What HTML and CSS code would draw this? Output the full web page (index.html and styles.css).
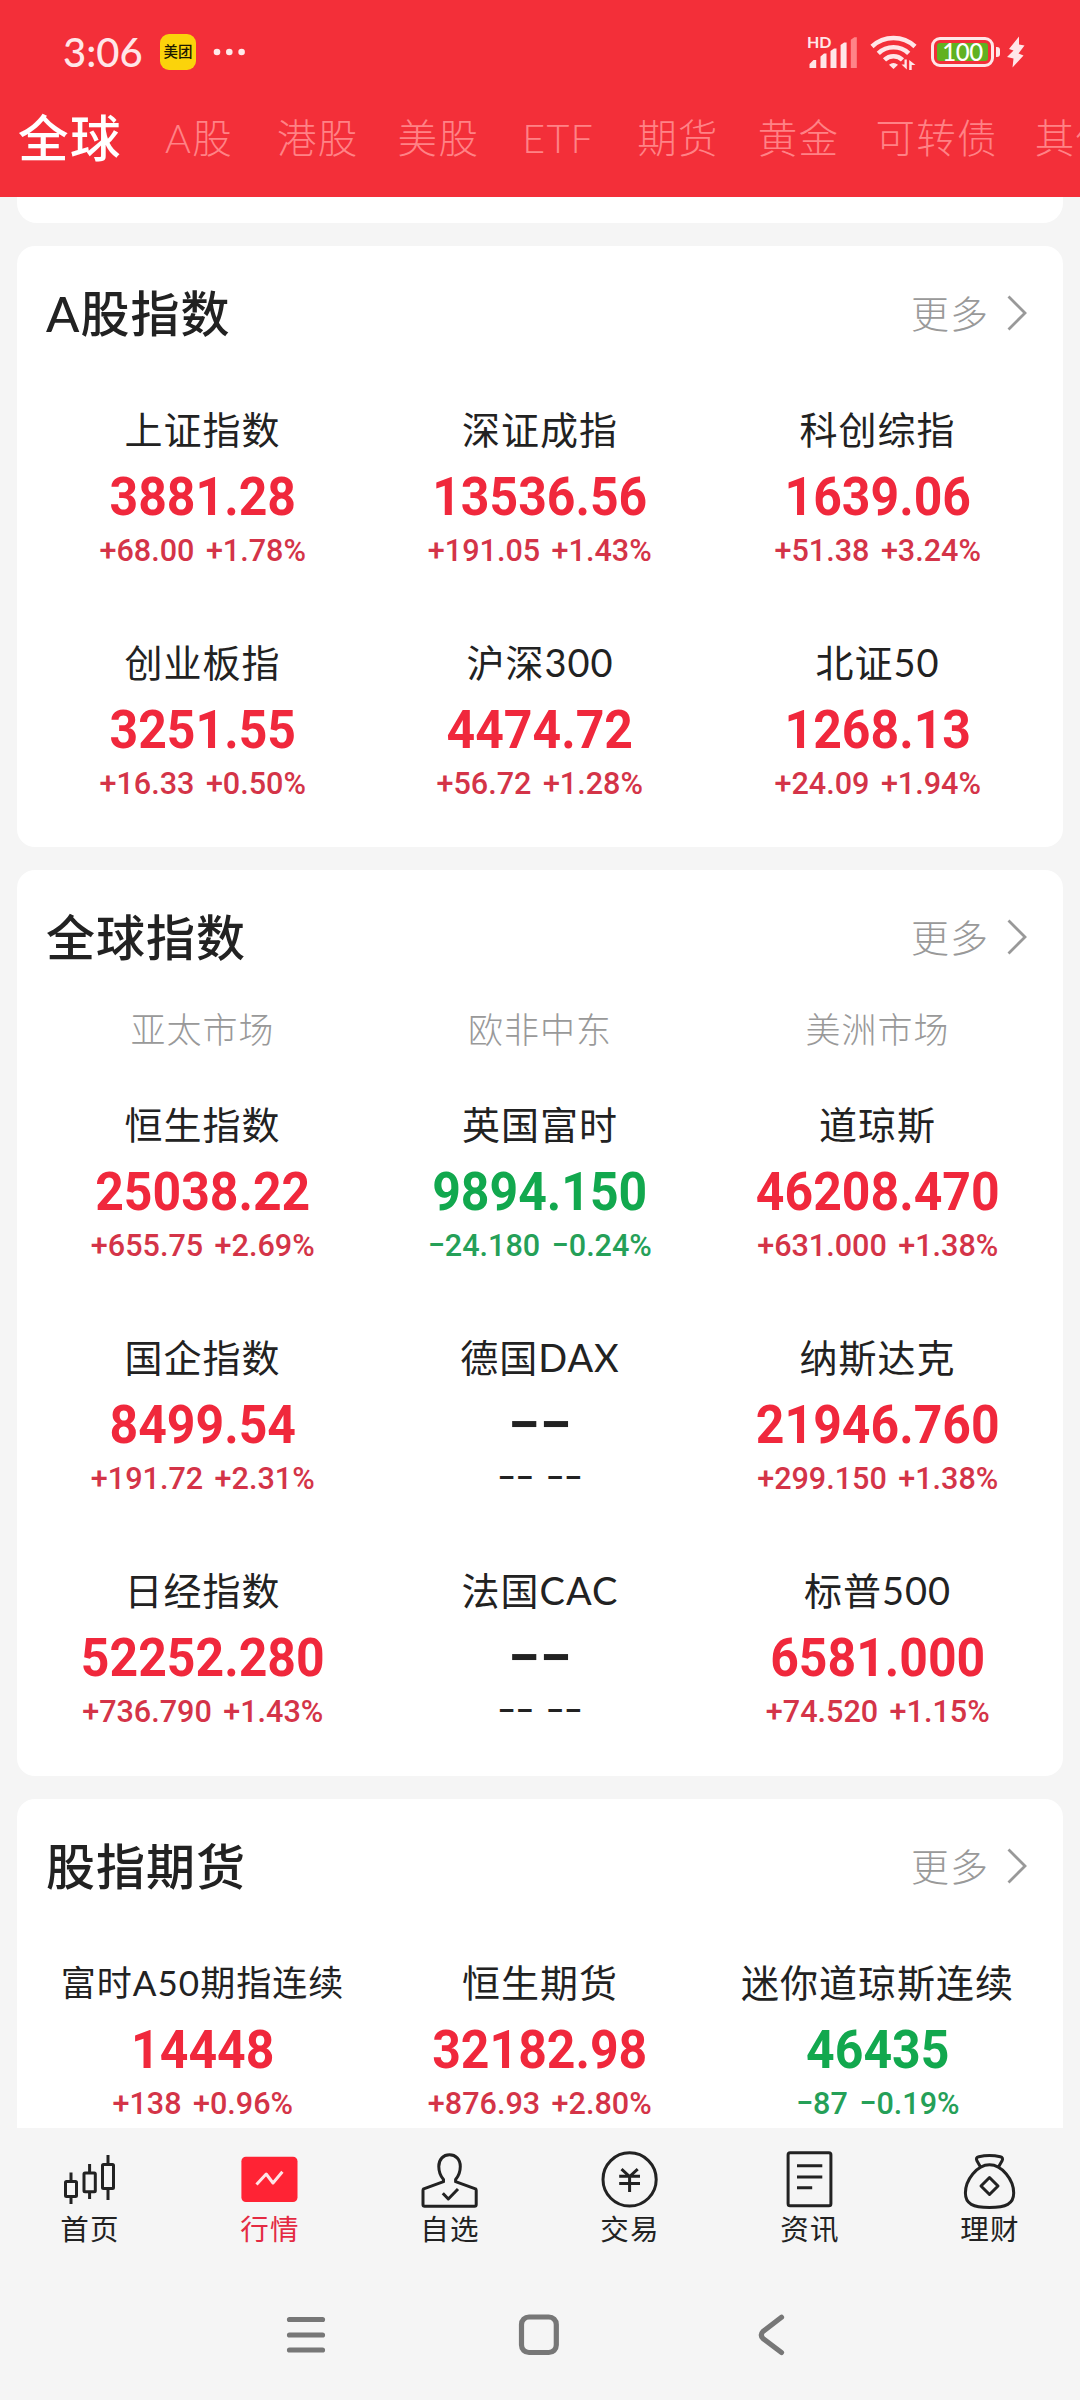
FILE: index.html
```html
<!DOCTYPE html>
<html lang="zh-CN">
<head>
<meta charset="utf-8">
<title>行情</title>
<link rel="stylesheet" href="styles.css">
</head>
<body>
<div class="screen">
  <header class="top">
    <div class="status">
      <span class="clock">3:06</span>
      <span class="app-badge">美团</span>
      <svg class="dots" width="28" height="8" viewBox="0 0 28 8" fill="#ffe9e9"><circle cx="4" cy="4" r="3.3"/><circle cx="16.3" cy="4" r="3.3"/><circle cx="28.6" cy="4" r="3.3"/></svg>
      <div class="status-right">
        <div class="signal">
          <span class="hd">HD</span>
          <svg width="50" height="36" viewBox="0 0 50 36" fill="#ffe6e8"><path d="M1.500 34v-4l4-4h2.700v8zM12.500 34V22.500l3.500-3h2.500V34zM22.500 34V17l3.500-2.500h2.500V34zM32.600 34V11l3.500-2.500h2.500V34z"/><path d="M42.800 34V5.700L46.300 3.200h2.500V34z" fill="#ff8488"/></svg>
        </div>
        <svg class="wifi" width="48" height="36" viewBox="0 0 48 36" fill="none" stroke="#ffe6e8" stroke-width="4.600"><path d="M2 12.500a31.500 31.500 0 0 1 43 0"/><path d="M8.300 19.300a22 22 0 0 1 30.400 0"/><path d="M14.500 25.800a13 13 0 0 1 18 0"/><path d="M23.500 35l-4.500-4.300q4.500-3.500 9 0z" fill="#ffe6e8" stroke="none"/><path d="M36.800 25.500V35.500L31.500 30.500H34.500V25.500zM39.200 36V26L45.500 31H41.700V36z" fill="#ffe6e8" stroke="none"/></svg>
        <div class="battery"><span>100</span></div>
        <svg class="bolt" width="18" height="32" viewBox="0 0 18 32" fill="#ffe6e8"><path d="M12 0.500L2 13 6.500 14.500 0 21 6.500 22.500 5.500 31.500 16.500 19.500 11.500 17.500 17.500 9.500 12 8.500z"/></svg>
      </div>
    </div>
    <nav class="tabs">
      <span class="tab on">全球</span><span class="tab tab-a">A股</span><span class="tab">港股</span><span class="tab">美股</span><span class="tab tab-etf">ETF</span><span class="tab">期货</span><span class="tab">黄金</span><span class="tab tab-bond">可转债</span><span class="tab">其他</span>
    </nav>
  </header>

  <main class="content">
    <div class="card-tail"></div>

    <section class="card">
      <div class="card-head"><h2>A股指数</h2><a class="more">更多<svg width="20" height="36" viewBox="0 0 20 36"><path d="M1.500 1.500L18 18 1.500 34.500"/></svg></a></div>
      <div class="grid">
        <div class="cell up"><div class="name">上证指数</div><div class="price">3881.28</div><div class="chg">+68.00 +1.78%</div></div>
        <div class="cell up"><div class="name">深证成指</div><div class="price">13536.56</div><div class="chg">+191.05 +1.43%</div></div>
        <div class="cell up"><div class="name">科创综指</div><div class="price">1639.06</div><div class="chg">+51.38 +3.24%</div></div>
        <div class="cell up"><div class="name">创业板指</div><div class="price">3251.55</div><div class="chg">+16.33 +0.50%</div></div>
        <div class="cell up"><div class="name">沪深300</div><div class="price">4474.72</div><div class="chg">+56.72 +1.28%</div></div>
        <div class="cell up"><div class="name">北证50</div><div class="price">1268.13</div><div class="chg">+24.09 +1.94%</div></div>
      </div>
    </section>

    <section class="card">
      <div class="card-head"><h2>全球指数</h2><a class="more">更多<svg width="20" height="36" viewBox="0 0 20 36"><path d="M1.500 1.500L18 18 1.500 34.500"/></svg></a></div>
      <div class="markets"><span>亚太市场</span><span>欧非中东</span><span>美洲市场</span></div>
      <div class="grid grid-markets">
        <div class="cell up"><div class="name">恒生指数</div><div class="price">25038.22</div><div class="chg">+655.75 +2.69%</div></div>
        <div class="cell down"><div class="name">英国富时</div><div class="price">9894.150</div><div class="chg">−24.180 −0.24%</div></div>
        <div class="cell up"><div class="name">道琼斯</div><div class="price">46208.470</div><div class="chg">+631.000 +1.38%</div></div>
        <div class="cell up"><div class="name">国企指数</div><div class="price">8499.54</div><div class="chg">+191.72 +2.31%</div></div>
        <div class="cell none"><div class="name">德国DAX</div><div class="price">−−</div><div class="chg">−− −−</div></div>
        <div class="cell up"><div class="name">纳斯达克</div><div class="price">21946.760</div><div class="chg">+299.150 +1.38%</div></div>
        <div class="cell up"><div class="name">日经指数</div><div class="price">52252.280</div><div class="chg">+736.790 +1.43%</div></div>
        <div class="cell none"><div class="name">法国CAC</div><div class="price">−−</div><div class="chg">−− −−</div></div>
        <div class="cell up"><div class="name">标普500</div><div class="price">6581.000</div><div class="chg">+74.520 +1.15%</div></div>
      </div>
    </section>

    <section class="card">
      <div class="card-head"><h2>股指期货</h2><a class="more">更多<svg width="20" height="36" viewBox="0 0 20 36"><path d="M1.500 1.500L18 18 1.500 34.500"/></svg></a></div>
      <div class="grid">
        <div class="cell up"><div class="name name-long">富时A50期指连续</div><div class="price">14448</div><div class="chg">+138 +0.96%</div></div>
        <div class="cell up"><div class="name">恒生期货</div><div class="price">32182.98</div><div class="chg">+876.93 +2.80%</div></div>
        <div class="cell down"><div class="name">迷你道琼斯连续</div><div class="price">46435</div><div class="chg">−87 −0.19%</div></div>
      </div>
    </section>
  </main>

  <nav class="tabbar">
    <div class="item"><svg viewBox="0 0 60 60"><rect x="5.500" y="31.500" width="11" height="15" rx="1"/><path d="M11 22.500v8M11 47v7"/><rect x="24" y="23" width="11.300" height="18.800" rx="1"/><path d="M29.600 14v8M29.600 43v6"/><rect x="42.500" y="14.500" width="11" height="24" rx="1"/><path d="M48 5v8M48 40v10"/></svg><span>首页</span></div>
    <div class="item active"><svg viewBox="0 0 60 60"><rect x="1.400" y="6.700" width="56.100" height="45.300" rx="4.500" fill="#ff2334" stroke="none"/><path d="M16.500 34.500L26.200 24 33 33 42.400 21.800" stroke="#ffe4e6"/></svg><span>行情</span></div>
    <div class="item"><svg viewBox="0 0 60 60"><path d="M23.500 31.700V29.500C20 25.500 18.800 21 18.800 16.500 18.800 9 23.500 4.800 29.500 4.800S40.300 9 40.300 16.500C40.300 21 39 25.500 35.600 29.500V31.700L55.500 38.800Q56.200 39.300 56.200 40.500V54.500Q56.200 56.200 54.500 56.200H4.700Q3 56.200 3 54.500V40.500Q3 39.300 3.700 38.800Z"/><path d="M22.800 43.300L28.300 49 38 39"/></svg><span>自选</span></div>
    <div class="item"><svg viewBox="0 0 60 60"><circle cx="29.600" cy="29.400" r="26.600"/><path d="M21.500 19.200L29.600 26.500 37.700 19.200M19.200 26.300H40M19.200 33.500H40M29.600 26.500V42"/></svg><span>交易</span></div>
    <div class="item"><svg viewBox="0 0 60 60"><rect x="8.100" y="2.800" width="42.800" height="53" rx="2"/><path d="M17 15.800H42.300M17 27H42.300M17 37.800H32.200"/></svg><span>资讯</span></div>
    <div class="item"><svg viewBox="0 0 60 60"><path d="M20.500 17L16.800 10.500Q15.500 7.500 18.800 6.700 29.500 4.500 40.300 6.700 43.500 7.500 42.200 10.500L38.500 17"/><path d="M29.500 14.800C42 14.800 53.700 30 53.700 43 53.700 54 46 57.400 29.500 57.400S5.400 54 5.400 43C5.400 30 17 14.800 29.500 14.800Z"/><path d="M29.500 27.500L38 36 29.500 44.500 21 36Z"/></svg><span>理财</span></div>
  </nav>
  <nav class="sysbar">
    <svg viewBox="0 0 44 44"><path d="M5.500 6.500h33M5.500 22h33M5.500 37h33"/></svg>
    <svg viewBox="0 0 44 44"><rect x="4.500" y="4" width="34.800" height="35.500" rx="7.500"/></svg>
    <svg viewBox="0 0 44 44"><path d="M31.500 4.300L13 18.500Q9.500 22 13 25.500L31.500 39.500"/></svg>
  </nav>
</div>
</body>
</html>
```
FILE: styles.css
```css
* { box-sizing: border-box; }
body {
  margin: 0;
  background: #f5f5f5;
  color: #222;
  font-family: Lato, "Noto Sans CJK SC", sans-serif;
}
.screen {
  width: 1080px;
  height: 2400px;
  display: flex;
  flex-direction: column;
  overflow: hidden;
}

/* header */
.top { height: 197px; flex: none; background: #f32f39; }
.status { height: 104px; display: flex; align-items: center; padding-left: 63px; }
.clock { width: 97px; font-size: 40px; line-height: 40px; color: #ffe6e8; font-weight: 500; }
.app-badge {
  width: 36px; height: 36px; border-radius: 9px; background: #fbd30b; color: #1d1800;
  font-size: 14.500px; font-weight: 500; line-height: 35px; text-align: center;
}
.dots { margin-left: 17px; overflow: visible; }
.status-right { margin-left: auto; padding-right: 55px; display: flex; align-items: center; height: 36px; }
.signal { position: relative; width: 50px; height: 36px; margin-right: 12px; }
.signal svg { display: block; overflow: visible; }
.hd { position: absolute; left: -1px; top: 0; font-size: 16px; line-height: 16px; font-weight: 700; color: #ffe6e8; }
.wifi { margin-right: 13px; }
.battery {
  position: relative; width: 63px; height: 30px; border: 3px solid #ffe6e8; border-radius: 9px;
  padding: 3px; margin-right: 13px;
}
.battery span {
  display: block; height: 18px; background: #61b121; border-radius: 3px; color: #fff;
  font-size: 24px; line-height: 18px; text-align: center; font-weight: 500; letter-spacing: -0.5px;
}
.battery::after {
  content: ""; position: absolute; right: -9px; top: 7px; width: 4px; height: 10px;
  background: #ffe6e8; border-radius: 0 3px 3px 0;
}
.tabs { display: flex; align-items: center; gap: 39px; padding-left: 18px; height: 68px; white-space: nowrap; }
.tab { flex: none; font-size: 39.500px; line-height: 60px; letter-spacing: 1.300px; font-weight: 300; color: #ff8286; }
.tab.on { font-size: 50.500px; letter-spacing: 1.500px; font-weight: 500; color: #fff; margin-right: 4px; }
.tab-a { margin-right: 5px; }
.tab-etf { margin: 0 4px; }
.tab-bond { margin: 0 -2px 0 -3px; }

/* cards */
.content { flex: 1; min-height: 0; overflow: hidden; padding: 0 17px; }
.card-tail { height: 25.500px; background: #fff; border-radius: 0 0 20px 20px; }
.card { margin-top: 23px; background: #fff; border-radius: 18px; padding-bottom: 44.500px; }
.card-head { height: 134px; padding: 0 36px 0 29px; display: flex; justify-content: space-between; align-items: center; }
h2 { margin: 0; font-size: 49px; letter-spacing: 1px; font-weight: 500; line-height: 60px; color: #222; }
.more { display: flex; align-items: center; gap: 18px; font-size: 38px; line-height: 50px; letter-spacing: 1px; font-weight: 300; color: #999; }
.more svg { fill: none; stroke: #999; stroke-width: 2.800; }
.grid {
  display: grid; grid-template-columns: repeat(3, 337.500px); row-gap: 67px;
  justify-content: center; padding-top: 24px;
}
.grid-markets { padding-top: 45px; }
.markets {
  display: grid; grid-template-columns: repeat(3, 337.500px); justify-content: center; text-align: center;
  font-size: 35px; line-height: 50px; letter-spacing: 1px; font-weight: 300; color: #999;
}
.cell { text-align: center; white-space: nowrap; }
.name { font-size: 38px; line-height: 50px; letter-spacing: 1px; }
.name-long { font-size: 35px; }
.price {
  margin-top: 13px; font-family: Roboto, sans-serif; font-size: 54px; line-height: 60px;
  font-weight: 700; transform: scaleX(0.925);
}
.chg {
  margin-top: 3px; font-family: Roboto, sans-serif; font-size: 32px; line-height: 40px;
  font-weight: 500; word-spacing: 4px; transform: scaleX(0.955);
}
.up .price { color: #f0283c; }
.up .chg { color: #d43448; }
.down .price { color: #12a84e; }
.down .chg { color: #25a058; }
.none .price { transform: scaleX(1.060); }
.none .chg { transform: scaleX(1.010); }

/* bottom bars */
.tabbar { flex: none; height: 142px; display: grid; grid-template-columns: repeat(6, 1fr); padding-top: 22px; }
.item { display: flex; flex-direction: column; align-items: center; }
.item svg { width: 60px; height: 60px; fill: none; stroke: #222; stroke-width: 3; stroke-linejoin: round; }
.item span { font-size: 28.500px; line-height: 38px; letter-spacing: 1.300px; }
.item.active span { color: #e42a42; }
.sysbar { flex: none; height: 130px; display: flex; justify-content: center; gap: 189px; padding: 43px 2px 0 0; }
.sysbar svg { width: 44px; height: 44px; fill: none; stroke: #777; stroke-width: 5.200; stroke-linecap: round; }
```
